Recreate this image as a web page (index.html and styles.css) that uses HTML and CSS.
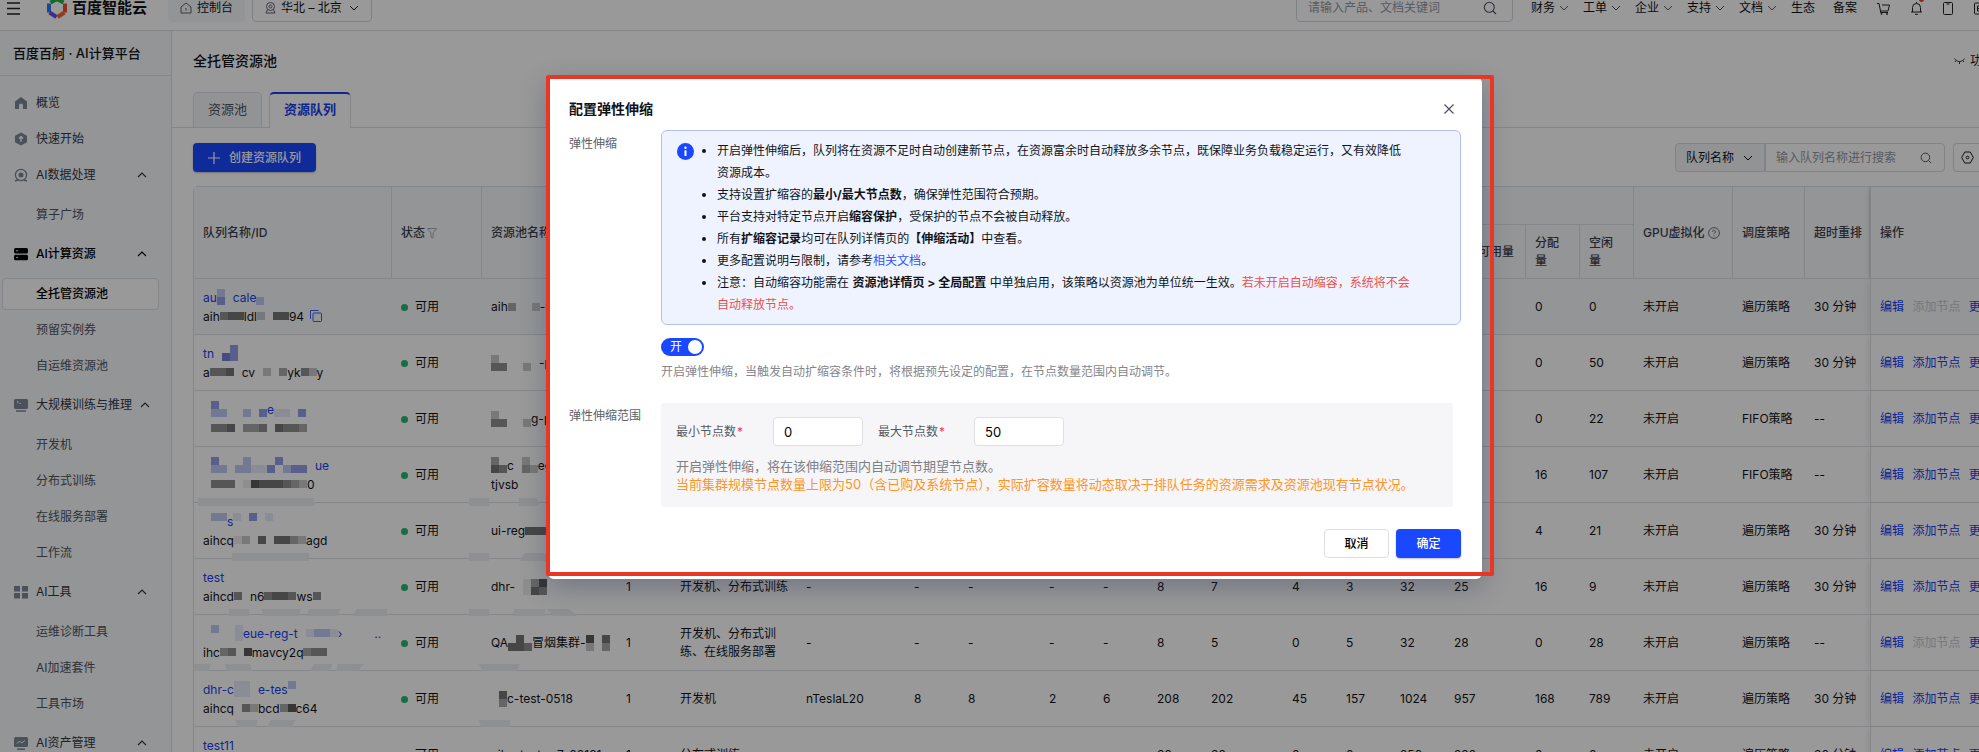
FILE: index.html
```html
<!DOCTYPE html>
<html lang="zh-CN">
<head>
<meta charset="utf-8">
<title>百度百舸 · AI计算平台</title>
<link rel="stylesheet" href="styles.css">
</head>
<body>
<svg class="defs" aria-hidden="true">
  <symbol id="down" viewBox="0 0 10 10"><path d="M1 3l4 4 4-4" fill="none" stroke="currentColor"/></symbol>
  <symbol id="up" viewBox="0 0 10 10"><path d="M1 7l4-4 4 4" fill="none" stroke="currentColor" stroke-width="1.2"/></symbol>
  <symbol id="search" viewBox="0 0 14 14"><circle cx="6.3" cy="6.3" r="5" fill="none" stroke="currentColor" stroke-width="1.1"/><path d="M10 10l3 3" stroke="currentColor" stroke-width="1.1"/></symbol>
</svg>
<div class="app">
  <header class="topbar">
    <button class="plain menu" aria-label="菜单"><svg width="14" height="14" viewBox="0 0 14 14"><path d="M0 2h13M0 7.500h13M0 13h13" stroke="#222" stroke-width="1.500"/></svg></button>
    <a class="logo" href="#">
      <svg width="20" height="22" viewBox="0 0 20 22" fill="none" stroke-width="4">
        <path d="M3.500 5.500L10 2l6.500 3.500" stroke="#22b04b"/><path d="M2 6.500v9" stroke="#2b7cf0"/><path d="M2.500 15.500L9.500 20" stroke="#6a4be8"/><path d="M18 6.500v9" stroke="#f0502e"/><path d="M17.500 15.500L10.500 20" stroke="#f2662b"/>
      </svg>
      <span>百度智能云</span>
    </a>
    <a class="console" href="#"><svg width="12" height="12" viewBox="0 0 12 12" fill="none" stroke="#5c6070"><path d="M1 5l5-4 5 4v6H1zM6 6v2.500"/></svg>控制台</a>
    <button class="region"><svg width="11" height="12" viewBox="0 0 11 12" fill="none" stroke="#5c6070"><circle cx="5.500" cy="4.500" r="4"/><circle cx="5.500" cy="4.500" r="1.500"/><path d="M2.500 7.500L1 11h9L8.500 7.500"/></svg>华北 – 北京<svg class="ic"><use href="#down"/></svg></button>
    <label class="topsearch"><input type="text" aria-label="搜索" placeholder="请输入产品、文档关键词"><svg class="ic14"><use href="#search"/></svg></label>
    <nav class="topnav">
      <a href="#">财务<svg class="ic"><use href="#down"/></svg></a>
      <a href="#">工单<svg class="ic"><use href="#down"/></svg></a>
      <a href="#">企业<svg class="ic"><use href="#down"/></svg></a>
      <a href="#">支持<svg class="ic"><use href="#down"/></svg></a>
      <a href="#">文档<svg class="ic"><use href="#down"/></svg></a>
      <a class="short" href="#">生态</a>
      <a class="short" href="#">备案</a>
    </nav>
    <div class="topicons">
      <svg width="13" height="13" viewBox="0 0 13 13" fill="none" stroke="#222"><path d="M0 1.500h2l1.500 7.500h7.500l1.500-6H5M3.500 9v1.500H11"/><circle cx="4.500" cy="12" r=".6"/><circle cx="10" cy="12" r=".6"/></svg>
      <span class="bell"><svg width="11" height="13" viewBox="0 0 11 13" fill="none" stroke="#222"><path d="M0 10h11M1.500 10V5.500a4 4 0 018 0V10M5.500 0v1.500M4 12.300h3"/></svg></span>
      <svg width="10" height="13" viewBox="0 0 10 13" fill="none" stroke="#222"><rect x=".5" y=".5" width="9" height="12" rx="1"/><path d="M3.500 2h3"/></svg>
      <svg width="13" height="13" viewBox="0 0 13 13" fill="none" stroke="#222"><rect x=".5" y="1" width="12" height="11" rx="1"/><path d="M6.500 4h-3v5h3M3.500 6.500h2.500"/></svg>
    </div>
  </header>

  <div class="body">
    <aside class="side">
      <h1>百度百舸 · AI计算平台</h1>
      <nav>
        <a class="item" href="#"><svg viewBox="0 0 14 14"><path d="M7 1l6 4.500V13H9V9.500a2 2 0 00-4 0V13H1V5.500z" fill="#7d8798"/></svg>概览</a>
        <a class="item" href="#"><svg viewBox="0 0 14 14"><path d="M7 .5l6 3.200v6.600L7 13.500l-6-3.200V3.700z" fill="#7d8798"/><path d="M7 10V5M5 6.500l2-2 2 2" stroke="#fff" fill="none" stroke-width="1.300"/></svg>快速开始</a>
        <a class="item" href="#"><svg viewBox="0 0 14 14"><circle cx="7" cy="7" r="5.600" fill="none" stroke="#7d8798" stroke-width="1.300"/><circle cx="7" cy="7" r="2.500" fill="#7d8798"/><path d="M1 13l3-1M13 13l-3-1" stroke="#7d8798" stroke-width="1.500"/></svg>AI数据处理<svg class="ic fold"><use href="#up"/></svg></a>
        <div class="kids"><a class="item" href="#">算子广场</a></div>
        <a class="item strong" href="#"><svg viewBox="0 0 14 14"><rect y="1" width="14" height="5.500" rx="1.500"/><rect y="7.800" width="14" height="5.500" rx="1.500"/><circle cx="3" cy="3.700" r=".8" fill="#fff"/><circle cx="3" cy="10.500" r=".8" fill="#fff"/></svg>AI计算资源<svg class="ic fold"><use href="#up"/></svg></a>
        <div class="kids"><a class="item active" href="#">全托管资源池</a><a class="item" href="#">预留实例券</a><a class="item" href="#">自运维资源池</a></div>
        <a class="item" href="#"><svg viewBox="0 0 14 14"><rect y="1" width="14" height="10" rx="1.500" fill="#7d8798"/><path d="M2 13h10" stroke="#7d8798" stroke-width="1.500"/><path d="M3 3l1.500 1L3 5M5.500 5.500H7" stroke="#fff" fill="none" stroke-width=".8"/></svg>大规模训练与推理<svg class="ic fold"><use href="#up"/></svg></a>
        <div class="kids"><a class="item" href="#">开发机</a><a class="item" href="#">分布式训练</a><a class="item" href="#">在线服务部署</a><a class="item" href="#">工作流</a></div>
        <a class="item" href="#"><svg viewBox="0 0 14 14" fill="#7d8798"><path d="M0 1h6v5.500H0zM8 1h6v5.500H8zM0 8h6v5.500H0zM8 8h6v5.500H8z"/></svg>AI工具<svg class="ic fold"><use href="#up"/></svg></a>
        <div class="kids"><a class="item" href="#">运维诊断工具</a><a class="item" href="#">AI加速套件</a><a class="item" href="#">工具市场</a></div>
        <a class="item" href="#"><svg viewBox="0 0 14 14"><rect y="1" width="14" height="10" rx="1.500" fill="#7d8798"/><path d="M3 13.200h8" stroke="#7d8798" stroke-width="1.500"/><path d="M3 7.500L5.500 5l2 2L11 4.500" stroke="#fff" fill="none"/></svg>AI资产管理<svg class="ic fold"><use href="#up"/></svg></a>
      </nav>
    </aside>

    <main>
      <div class="titlebar">
        <h2>全托管资源池</h2>
        <a href="#"><svg width="11" height="8" viewBox="0 0 11 8" fill="none" stroke="#333"><path d="M.5 1.500c2.500 4 7.500 4 10 0M2 3.500L1 5M5.500 4.500V7M9 3.500L10 5"/></svg>功能</a>
      </div>
      <div class="tabs" role="tablist">
        <button role="tab">资源池</button>
        <button role="tab" class="on" aria-selected="true">资源队列</button>
      </div>
      <div class="tools">
        <button class="primary create"><svg width="12" height="12" viewBox="0 0 12 12"><path d="M6 0v12M0 6h12" stroke="#fff" stroke-width="1.200"/></svg>创建资源队列</button>
        <div class="filter">
          <div class="pick"><select aria-label="筛选字段"><option>队列名称</option></select><svg class="ic"><use href="#down"/></svg></div>
          <label class="find"><input type="text" aria-label="输入队列名称进行搜索" placeholder="输入队列名称进行搜索"><svg class="ic12"><use href="#search"/></svg></label>
          <button class="gear" aria-label="设置"><svg width="13" height="13" viewBox="0 0 13 13" fill="none" stroke="#222"><path d="M3.700 1h5.600l3 5.500-3 5.500H3.700L.7 6.500z"/><circle cx="6.500" cy="6.500" r="1.300"/></svg></button>
        </div>
      </div>
      <div class="tablewrap">
        <table>
          <colgroup>
            <col class="w198"><col class="w90"><col class="w135"><col class="w54"><col class="w126"><col class="w108">
            <col class="w54"><col class="w81"><col class="w54"><col class="w54"><col class="w54"><col class="w81">
            <col class="w54"><col class="w54"><col class="w54"><col class="w81"><col class="w54"><col class="w54">
            <col class="w99"><col class="w72"><col class="w65"><col>
          </colgroup>
          <thead>
            <tr class="h1">
              <th rowspan="2">队列名称/ID</th>
              <th rowspan="2">状态<svg class="funnel" width="10" height="11" viewBox="0 0 10 11"><path d="M.5.5h9L6 5v5L4 9V5z" fill="none" stroke="#aaafba"/></svg></th>
              <th rowspan="2">资源池名称</th>
              <th rowspan="2"></th><th rowspan="2"></th><th rowspan="2"></th>
              <th colspan="4"></th><th colspan="4"></th><th colspan="4"></th>
              <th rowspan="2">GPU虚拟化 <svg class="help" width="12" height="12" viewBox="0 0 12 12" fill="none" stroke="#5c6070" stroke-width=".9"><circle cx="6" cy="6" r="5.400"/><path d="M4.500 4.800a1.500 1.500 0 112.300 1.200c-.6.400-.8.600-.8 1.200M6 8.300v.9"/></svg></th>
              <th rowspan="2">调度策略</th>
              <th rowspan="2">超时重排</th>
              <th rowspan="2" class="ops">操作</th>
            </tr>
            <tr class="h2"><th></th><th></th><th></th><th></th><th></th><th></th><th></th><th></th><th></th><th>实际可用量</th><th>分配量</th><th>空闲量</th></tr>
          </thead>
          <tbody id="rows"></tbody>
        </table>
        <svg class="smudge" aria-hidden="true" width="400" height="250" viewBox="0 0 400 250" fill="#edeff2">
          <path d="M4 11h116v8H4zM275 11h20v8h-20zM325 11h18l2 8h-20zM38 66h77v8H38zM275 66h20v8h-20zM331 66h22v8h-27zM35 122h20v7H35zM67 122h40l-3 7H70zM115 122h32l-5 7h-30zM163 122h30v7h-34zM275 122h20v7h-20zM320 122h31v7h-32zM353 122h22l8 7h-24zM0 177h17l-2 7H0zM31 177h25l2 7H33zM120 177h19l-4 7h-19zM144 177h26l-6 7h-22zM285 177h41l-3 7h-35zM41 233h23l-2 7H44zM77 233h25l-5 7H73zM285 233h31v7h-29z"/>
        </svg>
      </div>
    </main>
  </div>
</div>

<div class="mask">
  <section class="modal" role="dialog" aria-labelledby="mt">
    <header><h3 id="mt">配置弹性伸缩</h3><button class="plain" aria-label="关闭"><svg width="10" height="10" viewBox="0 0 10 10"><path d="M.5.5l9 9M9.500.5l-9 9" stroke="#4a5060" stroke-width="1.200"/></svg></button></header>
    <div class="field">
      <span class="lab">弹性伸缩</span>
      <div>
        <div class="alert">
          <svg width="17" height="17" viewBox="0 0 17 17"><circle cx="8.500" cy="8.500" r="8.500" fill="#1a48ff"/><path d="M8.500 7.300V13" stroke="#fff" stroke-width="2"/><circle cx="8.500" cy="4.700" r="1.200" fill="#fff"/></svg>
          <ul>
            <li>开启弹性伸缩后，队列将在资源不足时自动创建新节点，在资源富余时自动释放多余节点，既保障业务负载稳定运行，又有效降低资源成本。</li>
            <li>支持设置扩缩容的<b>最小/最大节点数</b>，确保弹性范围符合预期。</li>
            <li>平台支持对特定节点开启<b>缩容保护</b>，受保护的节点不会被自动释放。</li>
            <li>所有<b>扩缩容记录</b>均可在队列详情页的<b>【伸缩活动】</b>中查看。</li>
            <li>更多配置说明与限制，请参考<a href="#">相关文档</a>。</li>
            <li>注意：自动缩容功能需在 <b>资源池详情页 &gt; 全局配置</b> 中单独启用，该策略以资源池为单位统一生效。<em>若未开启自动缩容，系统将不会自动释放节点。</em></li>
          </ul>
        </div>
        <label class="switch"><input type="checkbox" role="switch" aria-label="弹性伸缩" checked><span>开</span></label>
        <p class="note">开启弹性伸缩，当触发自动扩缩容条件时，将根据预先设定的配置，在节点数量范围内自动调节。</p>
      </div>
    </div>
    <div class="field range">
      <span class="lab">弹性伸缩范围</span>
      <div class="panel">
        <div class="nums">
          <label for="min">最小节点数<i>*</i></label><input id="min" type="text" value="0">
          <label for="max">最大节点数<i>*</i></label><input id="max" type="text" value="50">
        </div>
        <p>开启弹性伸缩，将在该伸缩范围内自动调节期望节点数。</p>
        <p class="warn">当前集群规模节点数量上限为50（含已购及系统节点），实际扩容数量将动态取决于排队任务的资源需求及资源池现有节点状况。</p>
      </div>
    </div>
    <footer><button class="ghost">取消</button><button class="primary">确定</button></footer>
    <div class="frame"></div>
  </section>
</div>
<script src="app.js"></script>
</body>
</html>
```

FILE: styles.css
```css
* { box-sizing: border-box; }
body { margin: 0; height: 100vh; overflow: hidden; position: relative; background: #fff; color: #111318;
  font: 12px/18px Inter, "Noto Sans CJK SC", sans-serif; }
button, input, select { font: inherit; color: inherit; }
button { cursor: pointer; }
a { color: inherit; text-decoration: none; }
h1, h2, h3, p, ul { margin: 0; }
input::placeholder { color: #9298a6; opacity: 1; }
.defs { position: absolute; width: 0; height: 0; }
.ic { width: 10px; height: 10px; flex: none; }
.ic12 { width: 12px; height: 12px; flex: none; }
.ic14 { width: 14px; height: 14px; flex: none; }
.plain { border: 0; background: none; padding: 0; display: flex; }

.app { width: calc(100% + 51px); height: 100%; display: flex; flex-direction: column; overflow: hidden; }
.topbar { height: 45px; margin-top: -14px; flex: none; display: flex; align-items: center; border-bottom: 1px solid #dcdfe5; padding: 0 43px 0 7px; }
.menu { margin-right: 26px; }
.logo { display: flex; align-items: center; gap: 5px; font-size: 15px; font-weight: 700; margin-right: 21px; }
.console, .region, .topsearch { display: flex; align-items: center; height: 28px; border-radius: 4px; }
.console { background: #f5f7fa; padding: 0 12px; gap: 5px; margin-right: 7px; }
.region { border: 1px solid #d4d6dc; background: none; padding: 0 12px; gap: 5px; }
.region .ic { margin-left: 2px; }
.topsearch { width: 217px; border: 1px solid #d4d6dc; padding: 0 15px 0 11px; margin-left: auto; color: #4a5060; }
.topsearch input, .find input { flex: 1; min-width: 0; border: 0; background: none; padding: 0; outline: 0; }
.topnav { display: flex; gap: 14px; margin-left: 18px; }
.topnav a { display: flex; align-items: center; gap: 4px; }
.topnav .short + .short { margin-left: 4px; }
.topnav .ic { color: #555a66; }
.topicons { display: flex; align-items: center; gap: 21px; margin-left: 20px; }
.bell { position: relative; display: flex; }
.bell::after { content: ""; position: absolute; right: -2px; top: -5px; width: 5px; height: 5px; border-radius: 50%; background: #f33e3e; }

.body { display: flex; flex: 1; min-height: 0; }
.side { width: 172px; flex: none; background: #f6f8fb; border-right: 1px solid #dcdfe5; overflow: hidden; white-space: nowrap; }
.side h1 { font-size: 13px; font-weight: 500; line-height: 44px; padding-left: 13px; border-bottom: 1px solid #dcdfe5; }
.side nav { padding-top: 9px; }
.item { display: flex; align-items: center; height: 36px; padding-left: 14px; gap: 8px; color: #33373f; }
.item > svg:first-child { width: 14px; height: 14px; flex: none; }
.item .fold { margin: 0 24px 0 auto; }
.strong { font-weight: 500; color: #000; }
.kids { padding: 4px 0 3px; }
.kids .item { padding-left: 36px; color: #50545e; }
.kids .active { height: 32px; margin: 2px 12px 2px 2px; padding-left: 33px; background: #fff; border: 1px solid #dcdfe5; border-radius: 4px; color: #000; font-weight: 500; }

main { flex: 1; min-width: 0; }
.titlebar { display: flex; justify-content: space-between; align-items: center; padding: 20px 24px 0 21px; }
.titlebar h2 { font-size: 14px; line-height: 20px; font-weight: 500; }
.titlebar a { display: flex; align-items: center; gap: 5px; padding-right: 12px; }
.tabs { display: flex; gap: 7px; margin-top: 21px; padding-left: 21px; border-bottom: 1px solid #dcdfe5; }
.tabs button { height: 35px; padding: 0 14px 2px; font-size: 13px; border: 1px solid #dcdfe5; border-bottom: 0; border-radius: 5px 5px 0 0; background: #f4f6f9; color: #50545e; }
.tabs .on { background: #fff; border-top: 2px solid #1a3ef0; color: #1a3ef0; font-weight: 700; height: 36px; margin-bottom: -1px; padding-bottom: 4px; }
.tools { display: flex; justify-content: space-between; padding: 15px 18px 14px 21px; }
.primary { border: 0; background: #1a48ff; color: #fff; border-radius: 4px; height: 29px; font-weight: 500; box-shadow: 0 1px 2px rgba(0, 0, 40, .25); }
.create { display: flex; align-items: center; gap: 9px; padding: 0 15px; }
.filter { display: flex; height: 29px; }
.pick { display: flex; align-items: center; width: 90px; border: 1px solid #d6d9e0; border-radius: 4px 0 0 4px; background: #f3f5f8; padding: 0 11px 0 10px; }
.pick select { appearance: none; border: 0; background: none; padding: 0; flex: 1; min-width: 0; outline: 0; }
.find { display: flex; align-items: center; width: 180px; border: 1px solid #d6d9e0; border-radius: 0 4px 4px 0; padding: 0 12px 0 10px; color: #4a5060; }
.gear { width: 59px; margin-left: 8px; border: 1px solid #d6d9e0; border-radius: 4px; background: #fff; padding: 0 0 0 7px; display: flex; align-items: center; }

.tablewrap { position: relative; margin: 0 18px 0 21px; border: 1px solid #dcdfe5; border-radius: 5px 0 0 0; }
table { width: 100%; table-layout: fixed; border-spacing: 0; }
th { background: #f6f8fb; font-weight: 500; text-align: left; color: #3c404c; border-right: 1px solid #dcdfe5; border-bottom: 1px solid #dcdfe5; padding: 0 8px 0 9px; white-space: nowrap; }
.h1 { height: 38px; }
.h2 { height: 54px; }
.h2 th { white-space: normal; padding-right: 12px; }
.h2 th:nth-child(10) { white-space: nowrap; }
.funnel { margin-left: 2px; vertical-align: -2px; }
.help { vertical-align: -2px; }
td { height: 56px; padding: 0 8px 0 9px; border-bottom: 1px solid #dcdfe5; }
td.name, td.pool { padding-right: 0; white-space: nowrap; line-height: 19px; }
.ops { border-left: 1px solid #dcdfe5; box-shadow: -5px 0 6px -3px rgba(0, 0, 30, .08); white-space: nowrap; }
tr.hover td { background: #f6f8fb; }
td.ops { color: #1a3ef0; }
td.ops a { margin-right: 5px; }
td.ops .off { color: #c6c9d0; }
.line { display: flex; align-items: center; height: 19px; }
.link { color: #1a3ef0; }
.line svg { flex: none; }
.copy { margin-left: 6px; }
.dot { display: inline-block; width: 7px; height: 7px; border-radius: 50%; background: #2ab47a; margin-right: 7px; }
.smudge { position: absolute; left: 0; top: 300px; pointer-events: none; }
.w54 { width: 54px; } .w65 { width: 65px; } .w72 { width: 72px; } .w81 { width: 81px; } .w90 { width: 90px; }
.w99 { width: 99px; } .w108 { width: 108px; } .w126 { width: 126px; } .w135 { width: 135px; } .w198 { width: 198px; }

.mask { position: absolute; top: 0; left: 0; width: calc(100% + 51px); height: 100%; background: rgba(0, 0, 0, .4); display: flex; justify-content: center; align-items: flex-start; padding-top: 77px; }
.modal { position: relative; width: 46%; min-width: 820px; background: #fff; border-radius: 6px; padding: 21px; box-shadow: 0 8px 28px rgba(30, 40, 80, .32); }
.modal header { display: flex; justify-content: space-between; align-items: center; padding-right: 7px; height: 22px; }
.modal h3 { font-size: 14px; font-weight: 600; }
.field { display: grid; grid-template-columns: 92px 1fr; margin-top: 10px; }
.lab { color: #5c5f66; padding-top: 5px; }
.alert { display: flex; background: #eef3ff; border: 1px solid #adc0fb; border-radius: 6px; padding: 9px 15px 8px; }
.alert > svg { flex: none; margin-top: 3px; }
.alert ul { padding-left: 23px; width: 718px; line-height: 22px; }
.alert a { color: #2f54ff; }
.alert em { font-style: normal; color: #ee4f48; }
.switch { display: flex; margin-top: 13px; width: 43px; }
.switch input { position: absolute; opacity: 0; }
.switch span { position: relative; width: 43px; height: 18px; border-radius: 9px; background: #1a48ff; color: #fff; padding-left: 9px; }
.switch span::after { content: ""; position: absolute; right: 2px; top: 2px; width: 14px; height: 14px; border-radius: 50%; background: #fff; }
.note { color: #84868c; margin-top: 7px; }
.range { margin-top: 22px; }
.range .lab { padding-top: 4px; }
.panel { background: #f6f6f9; border-radius: 3px; margin-right: 8px; padding: 14px 15px; font-size: 13px; color: #7d7f85; }
.nums { display: flex; align-items: center; margin-bottom: 11px; }
.nums label { font-size: 12px; color: #55585f; width: 97px; }
.nums label i { color: #f33e3e; font-style: normal; margin-left: 1px; }
.nums input { width: 90px; height: 29px; margin-right: 15px; padding: 0 10px; border: 1px solid #dfe0e6; border-radius: 4px; background: #fff; color: #000; }
.nums input + label { width: 96px; }
.panel .warn { color: #ff9326; }
.modal footer { display: flex; justify-content: flex-end; gap: 7px; margin-top: 22px; }
.modal footer button { width: 65px; height: 29px; font-weight: 500; }
.ghost { border: 1px solid #dfe0e6; border-radius: 4px; background: #fff; color: #000; }
.frame { position: absolute; top: -2px; left: -2px; right: -12px; bottom: 3px; border: 4px solid #ea3624; border-radius: 2px; pointer-events: none; }
```

FILE: app.js
```js
const BLUE = ['', '#e6e9fa', '#c2caf5', '#929ee6', '#7080dd'];
const GREY = ['', '#ededed', '#c9c9c9', '#a9a9a9', '#8f8f8f', '#757575', '#5a5a5a'];
const CELL = 8;

// A masked run: "top/bottom" rows of tone digits, one 8px cell each.
const blur = (spec, tones) => {
  const lines = spec.split('/');
  const width = Math.max(...lines.map(l => l.length)) * CELL;
  const cells = lines.map((l, y) => [...l].map((c, x) =>
    +c ? `<rect x="${x * CELL}" y="${y * CELL}" width="${CELL}" height="${CELL}" fill="${tones[c]}"/>` : '').join('')).join('');
  return `<svg width="${width}" height="${lines.length * CELL}">${cells}</svg>`;
};
const line = (parts, tones, tag = 'span', tail = '') =>
  `<${tag} class="line${tag === 'a' ? ' link" href="#' : ''}">` +
  parts.map(p => p[0] === '#' ? blur(p.slice(1), tones) : `<span>${p}</span>`).join('') + tail + `</${tag}>`;

const copy = '<svg class="copy" width="12" height="12" viewBox="0 0 12 12" fill="none" stroke="#3f5cf0"><path d="M.5 9V.500h8"/><rect x="3" y="3" width="8.500" height="8.500" rx="1"/></svg>';
const E = ['', '', '', '', '', '', '', '', '', '', '', '', ''];
const T = '遍历策略', M = '30 分钟';

const rows = [
  { link: ['au', '#20/30', 'cale', '#0/2'], id: ['aih', '#455', 'ldl', '#2055', '94'], pool: [['aih', '#3002', '-p']], n: E, a: ['0', '0', T, M], hover: 1, off: 1, copy: 1 },
  { link: ['tn', '#003/043'], id: ['a', '#4450', 'cv', '#0203', 'yk', '#42', 'y'], pool: [['#200000/440020', '-p']], n: E, a: ['0', '50', T, M] },
  { link: ['#03000000/02200203', 'e', '#00000/11030'], id: ['#0445033405443'], pool: [['#20000/44002', 'g-p']], n: E, a: ['0', '22', 'FIFO策略', '--'] },
  { link: ['#03000200030000/02202211302330', 'ue'], id: ['#0444016555432', '0'], pool: [['#30/54', 'c', '#020/032', 'eg'], ['tjvsb']], n: E, a: ['16', '107', 'FIFO策略', '--'] },
  { link: ['#022/000', 's', '#10301/00000'], id: ['aihcq', '#120505532', 'agd'], pool: [['ui-reg', '#555']], n: E, a: ['4', '21', T, M] },
  { link: ['test'], id: ['aihcd', '#40', 'n6', '#4554', 'ws', '#4'], pool: [['dhr-', '#0136/0154']], n: ['1', '开发机、分布式训练', '-', '-', '-', '-', '-', '8', '7', '4', '3', '32', '25'], a: ['16', '9', T, M] },
  { link: ['#02001/00001', 'eue-reg-t', '#01221', '›', '#0000', '..'], id: ['ihc', '#3406', 'mavcy2q', '#344'], pool: [['QA', '#050/554', '冒烟集群-', '#6/2', '#05/03']], n: ['1', '开发机、分布式训练、在线服务部署', '-', '-', '-', '-', '-', '8', '5', '0', '5', '32', '28'], a: ['0', '28', T, '--'], off: 1 },
  { link: ['dhr-c', '#110/110', 'e-tes', '#2/0'], id: ['aihcq', '#042', 'bcd', '#36', 'c64'], pool: [['#05/03', 'c-test-0518']], n: ['1', '开发机', 'nTeslaL20', '8', '8', '2', '6', '208', '202', '45', '157', '1024', '957'], a: ['168', '789', T, M] },
  { link: ['test11'], id: ['aihcq-test11'], pool: [['aihc-test-m7-08181']], n: ['1', '分布式训练', '', '', '', '', '', '32', '32', '0', '0', '256', '232'], a: ['0', '0', T, M] },
];

document.getElementById('rows').innerHTML = rows.map(r => `
<tr${r.hover ? ' class="hover"' : ''}>
  <td class="name">${line(r.link, BLUE, 'a')}${line(r.id, GREY, 'span', r.copy ? copy : '')}</td>
  <td><i class="dot"></i>可用</td>
  <td class="pool">${r.pool.map(p => line(p, GREY)).join('')}</td>
  ${r.n.map(v => `<td>${v}</td>`).join('')}
  <td>${r.a[0]}</td><td>${r.a[1]}</td><td>未开启</td><td>${r.a[2]}</td><td>${r.a[3]}</td>
  <td class="ops"><a href="#">编辑</a> <a href="#"${r.off ? ' class="off"' : ''}>添加节点</a> <a href="#">更多</a></td>
</tr>`).join('');
```
